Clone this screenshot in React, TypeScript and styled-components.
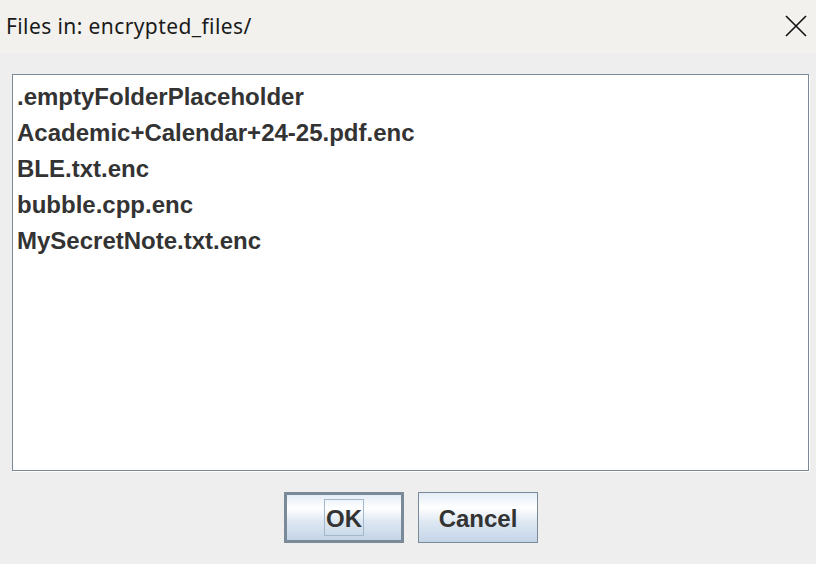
import React from "react";
import styled, { createGlobalStyle } from "styled-components";

const GlobalStyle = createGlobalStyle`
  html, body {
    margin: 0;
    padding: 0;
    width: 816px;
    height: 564px;
    overflow: hidden;
    background: #eeeeee;
  }
`;

const files = [
  ".emptyFolderPlaceholder",
  "Academic+Calendar+24-25.pdf.enc",
  "BLE.txt.enc",
  "bubble.cpp.enc",
  "MySecretNote.txt.enc",
];

const Window = styled.div`
  width: 816px;
  height: 564px;
  display: flex;
  flex-direction: column;
  background: #eeeeee;
`;

const TitleBar = styled.div`
  height: 53px;
  flex: none;
  display: flex;
  align-items: center;
  justify-content: space-between;
  padding: 0 8px 2px 6px;
  box-sizing: border-box;
  background: #f3f1ee;
`;

const Title = styled.span`
  font-family: "Noto Sans", "Open Sans", sans-serif;
  font-size: 21px;
  letter-spacing: 0.4px;
  color: #1a1a1a;
`;

const CloseButton = styled.button`
  width: 24px;
  height: 24px;
  padding: 0;
  border: none;
  background: none;
  display: flex;
  align-items: center;
  justify-content: center;
`;

const Content = styled.div`
  flex: 1;
  display: flex;
  flex-direction: column;
  padding: 21px 7px 0 12px;
`;

const FileList = styled.ul`
  margin: 0;
  padding: 8px 0 0 4px;
  list-style: none;
  height: 397px;
  box-sizing: border-box;
  background: #ffffff;
  border: 1px solid #7a8a99;
  box-shadow: 1px 1px 0 #ffffff;
`;

const FileItem = styled.li`
  height: 36px;
  line-height: 28px;
  font-family: "Liberation Sans", Arial, sans-serif;
  font-weight: bold;
  font-size: 24px;
  color: #333333;
  white-space: nowrap;
`;

const ButtonRow = styled.div`
  display: flex;
  justify-content: flex-start;
  gap: 14px;
  padding: 21px 0 0 272px;
`;

const DialogButton = styled.button<{ $default?: boolean }>`
  width: 120px;
  height: 51px;
  box-sizing: border-box;
  border: ${(p) => (p.$default ? "3px" : "1px")} solid #7b8a99;
  background: linear-gradient(
    to bottom,
    #e4edf7 0%,
    #ffffff 30%,
    #dde7f2 60%,
    #c4d5e7 100%
  );
  display: flex;
  align-items: center;
  justify-content: center;
  padding: 3px 0 0 0;
  font-family: "Liberation Sans", Arial, sans-serif;
  font-weight: bold;
  font-size: 24px;
  color: #333333;
`;

const FocusRing = styled.span`
  display: inline-flex;
  align-items: center;
  justify-content: center;
  width: 40px;
  height: 37px;
  margin-top: -3px;
  padding-top: 3px;
  box-sizing: border-box;
  border: 1px solid #a3b8cc;
`;

export default function App() {
  return (
    <Window>
      <GlobalStyle />
      <TitleBar>
        <Title>Files in: encrypted_files/</Title>
        <CloseButton aria-label="Close">
          <svg width="22" height="22" viewBox="0 0 22 22">
            <path
              d="M1 1 L21 21 M21 1 L1 21"
              stroke="#111"
              strokeWidth="1.6"
              fill="none"
            />
          </svg>
        </CloseButton>
      </TitleBar>
      <Content>
        <FileList>
          {files.map((f) => (
            <FileItem key={f}>{f}</FileItem>
          ))}
        </FileList>
        <ButtonRow>
          <DialogButton $default>
            <FocusRing>OK</FocusRing>
          </DialogButton>
          <DialogButton>Cancel</DialogButton>
        </ButtonRow>
      </Content>
    </Window>
  );
}
